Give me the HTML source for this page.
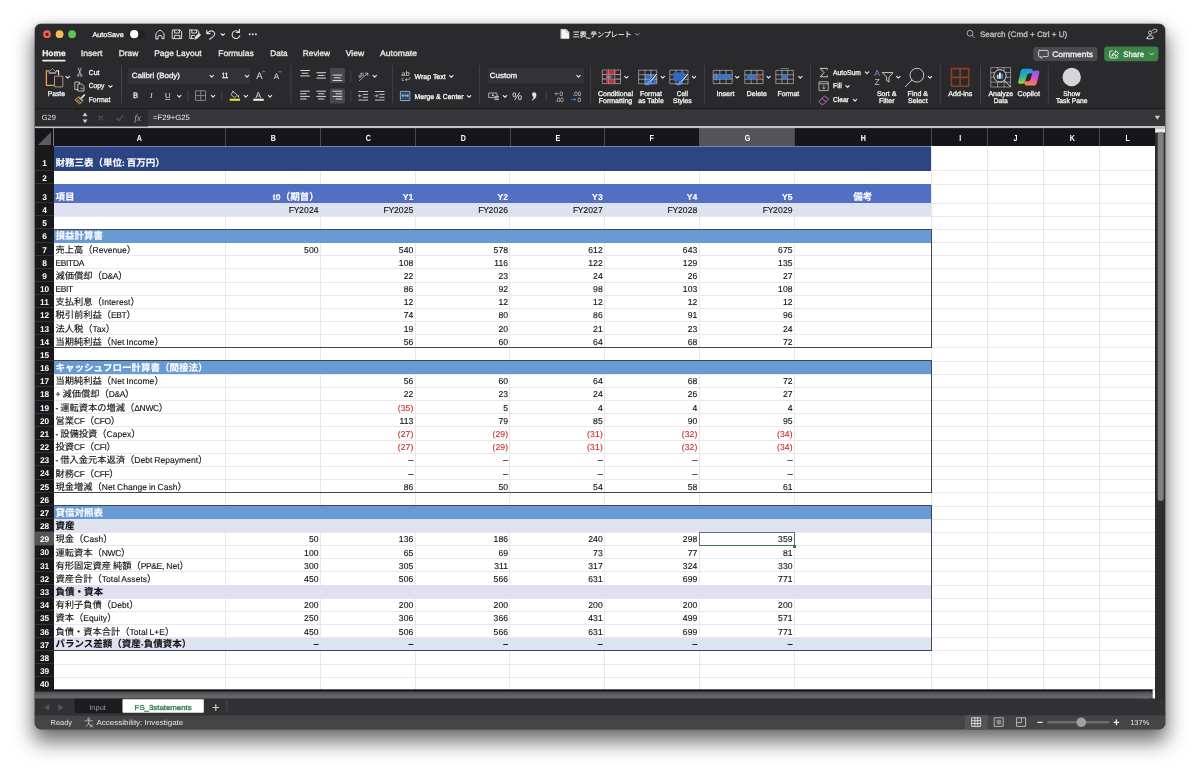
<!DOCTYPE html><html lang="ja"><head><meta charset="utf-8"><title>三表_テンプレート</title><style>html,body{margin:0;padding:0;background:#fff;}
body{text-rendering:geometricPrecision;width:1200px;height:776px;overflow:hidden;position:relative;font-family:"Liberation Sans","Noto Sans CJK JP",sans-serif;}
.win{will-change:transform;position:absolute;background:#2a292c;border-radius:6px;overflow:hidden;box-shadow:0 0 0 .5px rgba(0,0,0,.5),0 11px 20px 2px rgba(0,0,0,.56),0 0 7px rgba(0,0,0,.14);}
.win *{box-sizing:border-box;}
.win i{display:block;position:absolute;font-style:normal;}
.abs{position:absolute;}
/* grid */
.grid{position:absolute;background:#fff;overflow:hidden;}
.hl{left:0;width:100%;height:1px;background:#e7e7ec;}
.vl{top:0;height:100%;width:1px;background:#e7e7ec;}
.fill{left:0;}
.box{left:-2px;border:1px solid #3e4758;}
.c{position:absolute;font-size:9.25px;color:#111;-webkit-text-stroke:0.12px;white-space:nowrap;display:flex;align-items:flex-end;line-height:1;padding-bottom:0.8px;}
.c .l{font-size:8.5px;letter-spacing:0.04px;word-spacing:-0.5px;}
.c .l.u{letter-spacing:-0.36px;}
.c .t{position:relative;top:-0.1px;}
.c.b{font-weight:bold;}
.c.w{color:#fff;}
.c.r{justify-content:flex-end;}
.c.ctr{justify-content:center;}
.c.neg{color:#c9302c;}
.selbox{border:1px solid #4a7650;border-top-color:#6d7278;border-left-color:#6d7278;background:transparent;}
.selh{width:3px;height:3px;background:#3f6d45;}
/* headers */
.colhdr{position:absolute;background:#161518;}
.ch{position:absolute;top:0;height:100%;color:#fff;font-size:8.9px;font-weight:bold;text-align:center;line-height:20.3px;border-left:1px solid #4a494d;}
.ch span{display:inline-block;transform:scaleX(0.8);}
.ch.first{border-left:none;}
.ch.sel{background:#555457;border-left-color:#555457;}
.corner{left:0;top:0;width:19px;height:100%;border-right:1px solid #77767a;}
.corner:after{content:"";position:absolute;left:3px;bottom:1px;border-left:13px solid transparent;border-bottom:13px solid #5b5a5e;}
.rowhdr{position:absolute;background:#19181b;overflow:hidden;}
.rh{position:absolute;left:0;width:100%;color:#fff;font-size:8.3px;font-weight:bold;text-align:center;display:flex;align-items:flex-end;justify-content:center;line-height:1;padding-bottom:0.9px;border-bottom:1px solid #323135;}
.rh.sel{background:#555457;}
/* chrome */
.t7{position:absolute;color:#f2f2f2;font-size:7px;font-weight:bold;white-space:nowrap;line-height:1;}
.tab{position:absolute;color:#f2f2f2;font-size:8.2px;white-space:nowrap;line-height:1;top:25.4px;}
.lbl{position:absolute;color:#f2f2f2;font-size:6.6px;font-weight:bold;white-space:nowrap;line-height:7.6px;text-align:center;transform:translateX(-50%);}
.sep{position:absolute;width:1px;background:#403f43;top:44px;height:37px;}
.sep.s{height:12px;}
svg{position:absolute;overflow:visible;}

.c.r .l{font-size:8.6px;letter-spacing:0.12px;}
.c.r .l.u{letter-spacing:-0.3px;}
.c.b{font-size:9.5px;}
</style></head><body>
<div class="win" style="left:35px;top:24px;width:1130px;height:705px">
<div class="colhdr" style="left:0;top:104px;width:1120px;height:18.2px">
<i class="corner"></i>
<div class="ch first" style="left:19px;width:171.4px"><span>A</span></div>
<div class="ch" style="left:190.4px;width:94.8px"><span>B</span></div>
<div class="ch" style="left:285.2px;width:94.8px"><span>C</span></div>
<div class="ch" style="left:380px;width:94.7px"><span>D</span></div>
<div class="ch" style="left:474.7px;width:94.7px"><span>E</span></div>
<div class="ch" style="left:569.4px;width:94.6px"><span>F</span></div>
<div class="ch sel" style="left:664px;width:95.2px"><span>G</span></div>
<div class="ch" style="left:759.2px;width:137.2px"><span>H</span></div>
<div class="ch" style="left:896.4px;width:56.0px"><span>I</span></div>
<div class="ch" style="left:952.4px;width:56.0px"><span>J</span></div>
<div class="ch" style="left:1008.4px;width:56.0px"><span>K</span></div>
<div class="ch" style="left:1064.4px;width:55.6px"><span>L</span></div>
</div>
<div class="rowhdr" style="left:0;top:122.0px;width:19px;height:543.5px">
<div class="rh" style="top:0.0px;height:24.9px;padding-bottom:2.5px"><span>1</span></div>
<div class="rh" style="top:24.9px;height:13.1px"><span>2</span></div>
<div class="rh" style="top:38.0px;height:19.1px"><span>3</span></div>
<div class="rh" style="top:57.1px;height:13.17px"><span>4</span></div>
<div class="rh" style="top:70.27px;height:13.17px"><span>5</span></div>
<div class="rh" style="top:83.44px;height:13.17px"><span>6</span></div>
<div class="rh" style="top:96.61px;height:13.17px"><span>7</span></div>
<div class="rh" style="top:109.78px;height:13.17px"><span>8</span></div>
<div class="rh" style="top:122.95px;height:13.17px"><span>9</span></div>
<div class="rh" style="top:136.12px;height:13.17px"><span>10</span></div>
<div class="rh" style="top:149.29px;height:13.17px"><span>11</span></div>
<div class="rh" style="top:162.46px;height:13.17px"><span>12</span></div>
<div class="rh" style="top:175.63px;height:13.17px"><span>13</span></div>
<div class="rh" style="top:188.8px;height:13.17px"><span>14</span></div>
<div class="rh" style="top:201.97px;height:13.17px"><span>15</span></div>
<div class="rh" style="top:215.14px;height:13.17px"><span>16</span></div>
<div class="rh" style="top:228.31px;height:13.17px"><span>17</span></div>
<div class="rh" style="top:241.48px;height:13.17px"><span>18</span></div>
<div class="rh" style="top:254.65px;height:13.17px"><span>19</span></div>
<div class="rh" style="top:267.82px;height:13.17px"><span>20</span></div>
<div class="rh" style="top:280.99px;height:13.17px"><span>21</span></div>
<div class="rh" style="top:294.16px;height:13.17px"><span>22</span></div>
<div class="rh" style="top:307.33px;height:13.17px"><span>23</span></div>
<div class="rh" style="top:320.5px;height:13.17px"><span>24</span></div>
<div class="rh" style="top:333.67px;height:13.17px"><span>25</span></div>
<div class="rh" style="top:346.84px;height:13.17px"><span>26</span></div>
<div class="rh" style="top:360.01px;height:13.17px"><span>27</span></div>
<div class="rh" style="top:373.18px;height:13.17px"><span>28</span></div>
<div class="rh sel" style="top:386.35px;height:13.17px"><span>29</span></div>
<div class="rh" style="top:399.52px;height:13.17px"><span>30</span></div>
<div class="rh" style="top:412.69px;height:13.17px"><span>31</span></div>
<div class="rh" style="top:425.86px;height:13.17px"><span>32</span></div>
<div class="rh" style="top:439.03px;height:13.17px"><span>33</span></div>
<div class="rh" style="top:452.2px;height:13.17px"><span>34</span></div>
<div class="rh" style="top:465.37px;height:13.17px"><span>35</span></div>
<div class="rh" style="top:478.54px;height:13.17px"><span>36</span></div>
<div class="rh" style="top:491.71px;height:13.17px"><span>37</span></div>
<div class="rh" style="top:504.88px;height:13.17px"><span>38</span></div>
<div class="rh" style="top:518.05px;height:13.17px"><span>39</span></div>
<div class="rh" style="top:531.22px;height:13.17px"><span>40</span></div>
</div>
<div class="grid" style="left:19px;top:122.0px;width:1101px;height:543.5px">
<i class="hl" style="top:24.4px"></i>
<i class="hl" style="top:37.5px"></i>
<i class="hl" style="top:56.6px"></i>
<i class="hl" style="top:69.77px"></i>
<i class="hl" style="top:82.94px"></i>
<i class="hl" style="top:96.11px"></i>
<i class="hl" style="top:109.28px"></i>
<i class="hl" style="top:122.45px"></i>
<i class="hl" style="top:135.62px"></i>
<i class="hl" style="top:148.79px"></i>
<i class="hl" style="top:161.96px"></i>
<i class="hl" style="top:175.13px"></i>
<i class="hl" style="top:188.3px"></i>
<i class="hl" style="top:201.47px"></i>
<i class="hl" style="top:214.64px"></i>
<i class="hl" style="top:227.81px"></i>
<i class="hl" style="top:240.98px"></i>
<i class="hl" style="top:254.15px"></i>
<i class="hl" style="top:267.32px"></i>
<i class="hl" style="top:280.49px"></i>
<i class="hl" style="top:293.66px"></i>
<i class="hl" style="top:306.83px"></i>
<i class="hl" style="top:320.0px"></i>
<i class="hl" style="top:333.17px"></i>
<i class="hl" style="top:346.34px"></i>
<i class="hl" style="top:359.51px"></i>
<i class="hl" style="top:372.68px"></i>
<i class="hl" style="top:385.85px"></i>
<i class="hl" style="top:399.02px"></i>
<i class="hl" style="top:412.19px"></i>
<i class="hl" style="top:425.36px"></i>
<i class="hl" style="top:438.53px"></i>
<i class="hl" style="top:451.7px"></i>
<i class="hl" style="top:464.87px"></i>
<i class="hl" style="top:478.04px"></i>
<i class="hl" style="top:491.21px"></i>
<i class="hl" style="top:504.38px"></i>
<i class="hl" style="top:517.55px"></i>
<i class="hl" style="top:530.72px"></i>
<i class="hl" style="top:543.89px"></i>
<i class="vl" style="left:170.9px"></i>
<i class="vl" style="left:265.7px"></i>
<i class="vl" style="left:360.5px"></i>
<i class="vl" style="left:455.2px"></i>
<i class="vl" style="left:549.9px"></i>
<i class="vl" style="left:644.5px"></i>
<i class="vl" style="left:739.7px"></i>
<i class="vl" style="left:876.9px"></i>
<i class="vl" style="left:932.9px"></i>
<i class="vl" style="left:988.9px"></i>
<i class="vl" style="left:1044.9px"></i>
<i class="vl" style="left:1100.5px"></i>
<i class="fill" style="top:0.0px;height:24.9px;width:877px;background:#2c4482"></i>
<i class="fill" style="top:38.0px;height:19.1px;width:877px;background:#526fc3"></i>
<i class="fill" style="top:57.1px;height:13.17px;width:877px;background:#dde1f0"></i>
<i class="fill" style="top:83.44px;height:13.17px;width:877px;background:#689ad3"></i>
<i class="fill" style="top:215.14px;height:13.17px;width:877px;background:#689ad3"></i>
<i class="fill" style="top:360.01px;height:13.17px;width:877px;background:#689ad3"></i>
<i class="fill" style="top:373.18px;height:13.17px;width:877px;background:#dee3ef"></i>
<i class="fill" style="top:439.03px;height:13.17px;width:877px;background:#e1e0f2"></i>
<i class="fill" style="top:491.71px;height:13.17px;width:877px;background:#dde3f0"></i>
<i style="left:0;top:0;width:877.4px;height:0.9px;background:#7681b6"></i>
<i class="box" style="top:82.74px;height:119.53px;width:880px"></i>
<i class="box" style="top:214.44px;height:132.7px;width:880px"></i>
<i class="box" style="top:359.31px;height:145.87px;width:880px"></i>
<div class="c b w" style="top:0.0px;left:1.5px;width:600px;height:23.3px"><span class="t">財務三表（単位<span class="l">: </span>百万円）</span></div>
<div class="c b w" style="top:38.0px;left:1.5px;width:600px;height:19.1px"><span class="t">項目</span></div>
<div class="c b w r" style="top:38.0px;left:171.4px;width:93.3px;height:19.1px"><span class="t"><span class="l">t0</span>（期首）</span></div>
<div class="c b w r" style="top:38.0px;left:266.2px;width:93.3px;height:19.1px"><span class="t"><span class="l">Y1</span></span></div>
<div class="c b w r" style="top:38.0px;left:361px;width:93.2px;height:19.1px"><span class="t"><span class="l">Y2</span></span></div>
<div class="c b w r" style="top:38.0px;left:455.7px;width:93.2px;height:19.1px"><span class="t"><span class="l">Y3</span></span></div>
<div class="c b w r" style="top:38.0px;left:550.4px;width:93.1px;height:19.1px"><span class="t"><span class="l">Y4</span></span></div>
<div class="c b w r" style="top:38.0px;left:645px;width:93.7px;height:19.1px"><span class="t"><span class="l">Y5</span></span></div>
<div class="c r" style="top:57.1px;left:171.4px;width:93.3px;height:13.17px"><span class="t"><span class="l u">FY</span><span class="l">2024</span></span></div>
<div class="c r" style="top:57.1px;left:266.2px;width:93.3px;height:13.17px"><span class="t"><span class="l u">FY</span><span class="l">2025</span></span></div>
<div class="c r" style="top:57.1px;left:361px;width:93.2px;height:13.17px"><span class="t"><span class="l u">FY</span><span class="l">2026</span></span></div>
<div class="c r" style="top:57.1px;left:455.7px;width:93.2px;height:13.17px"><span class="t"><span class="l u">FY</span><span class="l">2027</span></span></div>
<div class="c r" style="top:57.1px;left:550.4px;width:93.1px;height:13.17px"><span class="t"><span class="l u">FY</span><span class="l">2028</span></span></div>
<div class="c r" style="top:57.1px;left:645px;width:93.7px;height:13.17px"><span class="t"><span class="l u">FY</span><span class="l">2029</span></span></div>
<div class="c b w" style="top:83.44px;left:1.5px;width:600px;height:13.17px"><span class="t">損益計算書</span></div>
<div class="c" style="top:96.61px;left:1.5px;width:600px;height:13.17px"><span class="t">売上高（<span class="l">Revenue</span>）</span></div>
<div class="c r" style="top:96.61px;left:171.4px;width:93.3px;height:13.17px"><span class="t"><span class="l">500</span></span></div>
<div class="c r" style="top:96.61px;left:266.2px;width:93.3px;height:13.17px"><span class="t"><span class="l">540</span></span></div>
<div class="c r" style="top:96.61px;left:361px;width:93.2px;height:13.17px"><span class="t"><span class="l">578</span></span></div>
<div class="c r" style="top:96.61px;left:455.7px;width:93.2px;height:13.17px"><span class="t"><span class="l">612</span></span></div>
<div class="c r" style="top:96.61px;left:550.4px;width:93.1px;height:13.17px"><span class="t"><span class="l">643</span></span></div>
<div class="c r" style="top:96.61px;left:645px;width:93.7px;height:13.17px"><span class="t"><span class="l">675</span></span></div>
<div class="c" style="top:109.78px;left:1.5px;width:600px;height:13.17px"><span class="t"><span class="l u">EBITDA</span></span></div>
<div class="c r" style="top:109.78px;left:266.2px;width:93.3px;height:13.17px"><span class="t"><span class="l">108</span></span></div>
<div class="c r" style="top:109.78px;left:361px;width:93.2px;height:13.17px"><span class="t"><span class="l">116</span></span></div>
<div class="c r" style="top:109.78px;left:455.7px;width:93.2px;height:13.17px"><span class="t"><span class="l">122</span></span></div>
<div class="c r" style="top:109.78px;left:550.4px;width:93.1px;height:13.17px"><span class="t"><span class="l">129</span></span></div>
<div class="c r" style="top:109.78px;left:645px;width:93.7px;height:13.17px"><span class="t"><span class="l">135</span></span></div>
<div class="c" style="top:122.95px;left:1.5px;width:600px;height:13.17px"><span class="t">減価償却（<span class="l u">D&amp;A</span>）</span></div>
<div class="c r" style="top:122.95px;left:266.2px;width:93.3px;height:13.17px"><span class="t"><span class="l">22</span></span></div>
<div class="c r" style="top:122.95px;left:361px;width:93.2px;height:13.17px"><span class="t"><span class="l">23</span></span></div>
<div class="c r" style="top:122.95px;left:455.7px;width:93.2px;height:13.17px"><span class="t"><span class="l">24</span></span></div>
<div class="c r" style="top:122.95px;left:550.4px;width:93.1px;height:13.17px"><span class="t"><span class="l">26</span></span></div>
<div class="c r" style="top:122.95px;left:645px;width:93.7px;height:13.17px"><span class="t"><span class="l">27</span></span></div>
<div class="c" style="top:136.12px;left:1.5px;width:600px;height:13.17px"><span class="t"><span class="l u">EBIT</span></span></div>
<div class="c r" style="top:136.12px;left:266.2px;width:93.3px;height:13.17px"><span class="t"><span class="l">86</span></span></div>
<div class="c r" style="top:136.12px;left:361px;width:93.2px;height:13.17px"><span class="t"><span class="l">92</span></span></div>
<div class="c r" style="top:136.12px;left:455.7px;width:93.2px;height:13.17px"><span class="t"><span class="l">98</span></span></div>
<div class="c r" style="top:136.12px;left:550.4px;width:93.1px;height:13.17px"><span class="t"><span class="l">103</span></span></div>
<div class="c r" style="top:136.12px;left:645px;width:93.7px;height:13.17px"><span class="t"><span class="l">108</span></span></div>
<div class="c" style="top:149.29px;left:1.5px;width:600px;height:13.17px"><span class="t">支払利息（<span class="l">Interest</span>）</span></div>
<div class="c r" style="top:149.29px;left:266.2px;width:93.3px;height:13.17px"><span class="t"><span class="l">12</span></span></div>
<div class="c r" style="top:149.29px;left:361px;width:93.2px;height:13.17px"><span class="t"><span class="l">12</span></span></div>
<div class="c r" style="top:149.29px;left:455.7px;width:93.2px;height:13.17px"><span class="t"><span class="l">12</span></span></div>
<div class="c r" style="top:149.29px;left:550.4px;width:93.1px;height:13.17px"><span class="t"><span class="l">12</span></span></div>
<div class="c r" style="top:149.29px;left:645px;width:93.7px;height:13.17px"><span class="t"><span class="l">12</span></span></div>
<div class="c" style="top:162.46px;left:1.5px;width:600px;height:13.17px"><span class="t">税引前利益（<span class="l u">EBT</span>）</span></div>
<div class="c r" style="top:162.46px;left:266.2px;width:93.3px;height:13.17px"><span class="t"><span class="l">74</span></span></div>
<div class="c r" style="top:162.46px;left:361px;width:93.2px;height:13.17px"><span class="t"><span class="l">80</span></span></div>
<div class="c r" style="top:162.46px;left:455.7px;width:93.2px;height:13.17px"><span class="t"><span class="l">86</span></span></div>
<div class="c r" style="top:162.46px;left:550.4px;width:93.1px;height:13.17px"><span class="t"><span class="l">91</span></span></div>
<div class="c r" style="top:162.46px;left:645px;width:93.7px;height:13.17px"><span class="t"><span class="l">96</span></span></div>
<div class="c" style="top:175.63px;left:1.5px;width:600px;height:13.17px"><span class="t">法人税（<span class="l">Tax</span>）</span></div>
<div class="c r" style="top:175.63px;left:266.2px;width:93.3px;height:13.17px"><span class="t"><span class="l">19</span></span></div>
<div class="c r" style="top:175.63px;left:361px;width:93.2px;height:13.17px"><span class="t"><span class="l">20</span></span></div>
<div class="c r" style="top:175.63px;left:455.7px;width:93.2px;height:13.17px"><span class="t"><span class="l">21</span></span></div>
<div class="c r" style="top:175.63px;left:550.4px;width:93.1px;height:13.17px"><span class="t"><span class="l">23</span></span></div>
<div class="c r" style="top:175.63px;left:645px;width:93.7px;height:13.17px"><span class="t"><span class="l">24</span></span></div>
<div class="c" style="top:188.8px;left:1.5px;width:600px;height:13.17px"><span class="t">当期純利益（<span class="l">Net Income</span>）</span></div>
<div class="c r" style="top:188.8px;left:266.2px;width:93.3px;height:13.17px"><span class="t"><span class="l">56</span></span></div>
<div class="c r" style="top:188.8px;left:361px;width:93.2px;height:13.17px"><span class="t"><span class="l">60</span></span></div>
<div class="c r" style="top:188.8px;left:455.7px;width:93.2px;height:13.17px"><span class="t"><span class="l">64</span></span></div>
<div class="c r" style="top:188.8px;left:550.4px;width:93.1px;height:13.17px"><span class="t"><span class="l">68</span></span></div>
<div class="c r" style="top:188.8px;left:645px;width:93.7px;height:13.17px"><span class="t"><span class="l">72</span></span></div>
<div class="c b w" style="top:215.14px;left:1.5px;width:600px;height:13.17px"><span class="t">キャッシュフロー計算書（間接法）</span></div>
<div class="c" style="top:228.31px;left:1.5px;width:600px;height:13.17px"><span class="t">当期純利益（<span class="l">Net Income</span>）</span></div>
<div class="c r" style="top:228.31px;left:266.2px;width:93.3px;height:13.17px"><span class="t"><span class="l">56</span></span></div>
<div class="c r" style="top:228.31px;left:361px;width:93.2px;height:13.17px"><span class="t"><span class="l">60</span></span></div>
<div class="c r" style="top:228.31px;left:455.7px;width:93.2px;height:13.17px"><span class="t"><span class="l">64</span></span></div>
<div class="c r" style="top:228.31px;left:550.4px;width:93.1px;height:13.17px"><span class="t"><span class="l">68</span></span></div>
<div class="c r" style="top:228.31px;left:645px;width:93.7px;height:13.17px"><span class="t"><span class="l">72</span></span></div>
<div class="c" style="top:241.48px;left:1.5px;width:600px;height:13.17px"><span class="t"><span class="l">+ </span>減価償却（<span class="l u">D&amp;A</span>）</span></div>
<div class="c r" style="top:241.48px;left:266.2px;width:93.3px;height:13.17px"><span class="t"><span class="l">22</span></span></div>
<div class="c r" style="top:241.48px;left:361px;width:93.2px;height:13.17px"><span class="t"><span class="l">23</span></span></div>
<div class="c r" style="top:241.48px;left:455.7px;width:93.2px;height:13.17px"><span class="t"><span class="l">24</span></span></div>
<div class="c r" style="top:241.48px;left:550.4px;width:93.1px;height:13.17px"><span class="t"><span class="l">26</span></span></div>
<div class="c r" style="top:241.48px;left:645px;width:93.7px;height:13.17px"><span class="t"><span class="l">27</span></span></div>
<div class="c" style="top:254.65px;left:1.5px;width:600px;height:13.17px"><span class="t"><span class="l">- </span>運転資本の増減（<span class="l u">ΔNWC</span>）</span></div>
<div class="c r neg" style="top:254.65px;left:266.2px;width:93.3px;height:13.17px"><span class="t"><span class="l">(35)</span></span></div>
<div class="c r" style="top:254.65px;left:361px;width:93.2px;height:13.17px"><span class="t"><span class="l">5</span></span></div>
<div class="c r" style="top:254.65px;left:455.7px;width:93.2px;height:13.17px"><span class="t"><span class="l">4</span></span></div>
<div class="c r" style="top:254.65px;left:550.4px;width:93.1px;height:13.17px"><span class="t"><span class="l">4</span></span></div>
<div class="c r" style="top:254.65px;left:645px;width:93.7px;height:13.17px"><span class="t"><span class="l">4</span></span></div>
<div class="c" style="top:267.82px;left:1.5px;width:600px;height:13.17px"><span class="t">営業<span class="l u">CF</span>（<span class="l u">CFO</span>）</span></div>
<div class="c r" style="top:267.82px;left:266.2px;width:93.3px;height:13.17px"><span class="t"><span class="l">113</span></span></div>
<div class="c r" style="top:267.82px;left:361px;width:93.2px;height:13.17px"><span class="t"><span class="l">79</span></span></div>
<div class="c r" style="top:267.82px;left:455.7px;width:93.2px;height:13.17px"><span class="t"><span class="l">85</span></span></div>
<div class="c r" style="top:267.82px;left:550.4px;width:93.1px;height:13.17px"><span class="t"><span class="l">90</span></span></div>
<div class="c r" style="top:267.82px;left:645px;width:93.7px;height:13.17px"><span class="t"><span class="l">95</span></span></div>
<div class="c" style="top:280.99px;left:1.5px;width:600px;height:13.17px"><span class="t"><span class="l">- </span>設備投資（<span class="l">Capex</span>）</span></div>
<div class="c r neg" style="top:280.99px;left:266.2px;width:93.3px;height:13.17px"><span class="t"><span class="l">(27)</span></span></div>
<div class="c r neg" style="top:280.99px;left:361px;width:93.2px;height:13.17px"><span class="t"><span class="l">(29)</span></span></div>
<div class="c r neg" style="top:280.99px;left:455.7px;width:93.2px;height:13.17px"><span class="t"><span class="l">(31)</span></span></div>
<div class="c r neg" style="top:280.99px;left:550.4px;width:93.1px;height:13.17px"><span class="t"><span class="l">(32)</span></span></div>
<div class="c r neg" style="top:280.99px;left:645px;width:93.7px;height:13.17px"><span class="t"><span class="l">(34)</span></span></div>
<div class="c" style="top:294.16px;left:1.5px;width:600px;height:13.17px"><span class="t">投資<span class="l u">CF</span>（<span class="l u">CFI</span>）</span></div>
<div class="c r neg" style="top:294.16px;left:266.2px;width:93.3px;height:13.17px"><span class="t"><span class="l">(27)</span></span></div>
<div class="c r neg" style="top:294.16px;left:361px;width:93.2px;height:13.17px"><span class="t"><span class="l">(29)</span></span></div>
<div class="c r neg" style="top:294.16px;left:455.7px;width:93.2px;height:13.17px"><span class="t"><span class="l">(31)</span></span></div>
<div class="c r neg" style="top:294.16px;left:550.4px;width:93.1px;height:13.17px"><span class="t"><span class="l">(32)</span></span></div>
<div class="c r neg" style="top:294.16px;left:645px;width:93.7px;height:13.17px"><span class="t"><span class="l">(34)</span></span></div>
<div class="c" style="top:307.33px;left:1.5px;width:600px;height:13.17px"><span class="t"><span class="l">- </span>借入金元本返済（<span class="l">Debt Repayment</span>）</span></div>
<div class="c r" style="top:307.33px;left:266.2px;width:93.3px;height:13.17px"><span class="t">–</span></div>
<div class="c r" style="top:307.33px;left:361px;width:93.2px;height:13.17px"><span class="t">–</span></div>
<div class="c r" style="top:307.33px;left:455.7px;width:93.2px;height:13.17px"><span class="t">–</span></div>
<div class="c r" style="top:307.33px;left:550.4px;width:93.1px;height:13.17px"><span class="t">–</span></div>
<div class="c r" style="top:307.33px;left:645px;width:93.7px;height:13.17px"><span class="t">–</span></div>
<div class="c" style="top:320.5px;left:1.5px;width:600px;height:13.17px"><span class="t">財務<span class="l u">CF</span>（<span class="l u">CFF</span>）</span></div>
<div class="c r" style="top:320.5px;left:266.2px;width:93.3px;height:13.17px"><span class="t">–</span></div>
<div class="c r" style="top:320.5px;left:361px;width:93.2px;height:13.17px"><span class="t">–</span></div>
<div class="c r" style="top:320.5px;left:455.7px;width:93.2px;height:13.17px"><span class="t">–</span></div>
<div class="c r" style="top:320.5px;left:550.4px;width:93.1px;height:13.17px"><span class="t">–</span></div>
<div class="c r" style="top:320.5px;left:645px;width:93.7px;height:13.17px"><span class="t">–</span></div>
<div class="c" style="top:333.67px;left:1.5px;width:600px;height:13.17px"><span class="t">現金増減（<span class="l">Net Change in Cash</span>）</span></div>
<div class="c r" style="top:333.67px;left:266.2px;width:93.3px;height:13.17px"><span class="t"><span class="l">86</span></span></div>
<div class="c r" style="top:333.67px;left:361px;width:93.2px;height:13.17px"><span class="t"><span class="l">50</span></span></div>
<div class="c r" style="top:333.67px;left:455.7px;width:93.2px;height:13.17px"><span class="t"><span class="l">54</span></span></div>
<div class="c r" style="top:333.67px;left:550.4px;width:93.1px;height:13.17px"><span class="t"><span class="l">58</span></span></div>
<div class="c r" style="top:333.67px;left:645px;width:93.7px;height:13.17px"><span class="t"><span class="l">61</span></span></div>
<div class="c b w" style="top:360.01px;left:1.5px;width:600px;height:13.17px"><span class="t">貸借対照表</span></div>
<div class="c b" style="top:373.18px;left:1.5px;width:600px;height:13.17px"><span class="t">資産</span></div>
<div class="c" style="top:386.35px;left:1.5px;width:600px;height:13.17px"><span class="t">現金（<span class="l">Cash</span>）</span></div>
<div class="c r" style="top:386.35px;left:171.4px;width:93.3px;height:13.17px"><span class="t"><span class="l">50</span></span></div>
<div class="c r" style="top:386.35px;left:266.2px;width:93.3px;height:13.17px"><span class="t"><span class="l">136</span></span></div>
<div class="c r" style="top:386.35px;left:361px;width:93.2px;height:13.17px"><span class="t"><span class="l">186</span></span></div>
<div class="c r" style="top:386.35px;left:455.7px;width:93.2px;height:13.17px"><span class="t"><span class="l">240</span></span></div>
<div class="c r" style="top:386.35px;left:550.4px;width:93.1px;height:13.17px"><span class="t"><span class="l">298</span></span></div>
<div class="c r" style="top:386.35px;left:645px;width:93.7px;height:13.17px"><span class="t"><span class="l">359</span></span></div>
<div class="c" style="top:399.52px;left:1.5px;width:600px;height:13.17px"><span class="t">運転資本（<span class="l u">NWC</span>）</span></div>
<div class="c r" style="top:399.52px;left:171.4px;width:93.3px;height:13.17px"><span class="t"><span class="l">100</span></span></div>
<div class="c r" style="top:399.52px;left:266.2px;width:93.3px;height:13.17px"><span class="t"><span class="l">65</span></span></div>
<div class="c r" style="top:399.52px;left:361px;width:93.2px;height:13.17px"><span class="t"><span class="l">69</span></span></div>
<div class="c r" style="top:399.52px;left:455.7px;width:93.2px;height:13.17px"><span class="t"><span class="l">73</span></span></div>
<div class="c r" style="top:399.52px;left:550.4px;width:93.1px;height:13.17px"><span class="t"><span class="l">77</span></span></div>
<div class="c r" style="top:399.52px;left:645px;width:93.7px;height:13.17px"><span class="t"><span class="l">81</span></span></div>
<div class="c" style="top:412.69px;left:1.5px;width:600px;height:13.17px"><span class="t">有形固定資産<span class="l"> </span>純額（<span class="l u">PP&amp;E</span><span class="l">, Net</span>）</span></div>
<div class="c r" style="top:412.69px;left:171.4px;width:93.3px;height:13.17px"><span class="t"><span class="l">300</span></span></div>
<div class="c r" style="top:412.69px;left:266.2px;width:93.3px;height:13.17px"><span class="t"><span class="l">305</span></span></div>
<div class="c r" style="top:412.69px;left:361px;width:93.2px;height:13.17px"><span class="t"><span class="l">311</span></span></div>
<div class="c r" style="top:412.69px;left:455.7px;width:93.2px;height:13.17px"><span class="t"><span class="l">317</span></span></div>
<div class="c r" style="top:412.69px;left:550.4px;width:93.1px;height:13.17px"><span class="t"><span class="l">324</span></span></div>
<div class="c r" style="top:412.69px;left:645px;width:93.7px;height:13.17px"><span class="t"><span class="l">330</span></span></div>
<div class="c" style="top:425.86px;left:1.5px;width:600px;height:13.17px"><span class="t">資産合計（<span class="l">Total Assets</span>）</span></div>
<div class="c r" style="top:425.86px;left:171.4px;width:93.3px;height:13.17px"><span class="t"><span class="l">450</span></span></div>
<div class="c r" style="top:425.86px;left:266.2px;width:93.3px;height:13.17px"><span class="t"><span class="l">506</span></span></div>
<div class="c r" style="top:425.86px;left:361px;width:93.2px;height:13.17px"><span class="t"><span class="l">566</span></span></div>
<div class="c r" style="top:425.86px;left:455.7px;width:93.2px;height:13.17px"><span class="t"><span class="l">631</span></span></div>
<div class="c r" style="top:425.86px;left:550.4px;width:93.1px;height:13.17px"><span class="t"><span class="l">699</span></span></div>
<div class="c r" style="top:425.86px;left:645px;width:93.7px;height:13.17px"><span class="t"><span class="l">771</span></span></div>
<div class="c b" style="top:439.03px;left:1.5px;width:600px;height:13.17px"><span class="t">負債・資本</span></div>
<div class="c" style="top:452.2px;left:1.5px;width:600px;height:13.17px"><span class="t">有利子負債（<span class="l">Debt</span>）</span></div>
<div class="c r" style="top:452.2px;left:171.4px;width:93.3px;height:13.17px"><span class="t"><span class="l">200</span></span></div>
<div class="c r" style="top:452.2px;left:266.2px;width:93.3px;height:13.17px"><span class="t"><span class="l">200</span></span></div>
<div class="c r" style="top:452.2px;left:361px;width:93.2px;height:13.17px"><span class="t"><span class="l">200</span></span></div>
<div class="c r" style="top:452.2px;left:455.7px;width:93.2px;height:13.17px"><span class="t"><span class="l">200</span></span></div>
<div class="c r" style="top:452.2px;left:550.4px;width:93.1px;height:13.17px"><span class="t"><span class="l">200</span></span></div>
<div class="c r" style="top:452.2px;left:645px;width:93.7px;height:13.17px"><span class="t"><span class="l">200</span></span></div>
<div class="c" style="top:465.37px;left:1.5px;width:600px;height:13.17px"><span class="t">資本（<span class="l">Equity</span>）</span></div>
<div class="c r" style="top:465.37px;left:171.4px;width:93.3px;height:13.17px"><span class="t"><span class="l">250</span></span></div>
<div class="c r" style="top:465.37px;left:266.2px;width:93.3px;height:13.17px"><span class="t"><span class="l">306</span></span></div>
<div class="c r" style="top:465.37px;left:361px;width:93.2px;height:13.17px"><span class="t"><span class="l">366</span></span></div>
<div class="c r" style="top:465.37px;left:455.7px;width:93.2px;height:13.17px"><span class="t"><span class="l">431</span></span></div>
<div class="c r" style="top:465.37px;left:550.4px;width:93.1px;height:13.17px"><span class="t"><span class="l">499</span></span></div>
<div class="c r" style="top:465.37px;left:645px;width:93.7px;height:13.17px"><span class="t"><span class="l">571</span></span></div>
<div class="c" style="top:478.54px;left:1.5px;width:600px;height:13.17px"><span class="t">負債・資本合計（<span class="l">Total L+E</span>）</span></div>
<div class="c r" style="top:478.54px;left:171.4px;width:93.3px;height:13.17px"><span class="t"><span class="l">450</span></span></div>
<div class="c r" style="top:478.54px;left:266.2px;width:93.3px;height:13.17px"><span class="t"><span class="l">506</span></span></div>
<div class="c r" style="top:478.54px;left:361px;width:93.2px;height:13.17px"><span class="t"><span class="l">566</span></span></div>
<div class="c r" style="top:478.54px;left:455.7px;width:93.2px;height:13.17px"><span class="t"><span class="l">631</span></span></div>
<div class="c r" style="top:478.54px;left:550.4px;width:93.1px;height:13.17px"><span class="t"><span class="l">699</span></span></div>
<div class="c r" style="top:478.54px;left:645px;width:93.7px;height:13.17px"><span class="t"><span class="l">771</span></span></div>
<div class="c b" style="top:491.71px;left:1.5px;width:600px;height:13.17px"><span class="t">バランス差額（資産<span class="l">-</span>負債資本）</span></div>
<div class="c b r" style="top:491.71px;left:171.4px;width:93.3px;height:13.17px"><span class="t">–</span></div>
<div class="c b r" style="top:491.71px;left:266.2px;width:93.3px;height:13.17px"><span class="t">–</span></div>
<div class="c b r" style="top:491.71px;left:361px;width:93.2px;height:13.17px"><span class="t">–</span></div>
<div class="c b r" style="top:491.71px;left:455.7px;width:93.2px;height:13.17px"><span class="t">–</span></div>
<div class="c b r" style="top:491.71px;left:550.4px;width:93.1px;height:13.17px"><span class="t">–</span></div>
<div class="c b r" style="top:491.71px;left:645px;width:93.7px;height:13.17px"><span class="t">–</span></div>
<div class="c b w ctr" style="top:38.0px;left:740.2px;width:137.2px;height:19.1px"><span class="t">備考</span></div>
<i class="selbox" style="top:385.95px;left:644.8px;width:96.2px;height:14.17px"></i>
<i class="selh" style="top:398.62px;left:739.3px"></i>
</div>
<svg class="chrome" width="1130" height="705" viewBox="35 24 1130 705" style="left:0;top:0;pointer-events:none" font-family="Liberation Sans, Noto Sans CJK JP, sans-serif">
<circle cx="47" cy="34.2" r="3.9" fill="#ee5f57"/>
<circle cx="59.6" cy="34.2" r="3.9" fill="#f5bd4f"/>
<circle cx="72.1" cy="34.2" r="3.9" fill="#5fc454"/>
<circle cx="47" cy="34.2" r="1.5" fill="#5a1210"/>
<text x="92.5" y="36.7" font-size="7" font-weight="normal" text-anchor="start" fill="#f1f1f1" textLength="31.2" lengthAdjust="spacingAndGlyphs" stroke="#f1f1f1" stroke-width="0.32">AutoSave</text>
<rect x="128.5" y="29.7" width="16.4" height="9" rx="4.5" fill="#222124"/>
<circle cx="134.2" cy="34.2" r="4.1" fill="#fdfdfd"/>
<path d="M155.9 38.7 V33.9 Q156 33.2 158.6 30.8 Q160 29.6 161.4 30.8 Q164 33.2 164.1 33.9 V38.7 H162 V36.3 Q160 34.1 158 36.3 V38.7 Z" fill="none" stroke="#dcdcdc" stroke-width="1" stroke-linecap="round" stroke-linejoin="round"/>
<path d="M172.6 30 H180 L181.6 31.6 V38.6 H172.6 Z M174.6 30.2 V33 H179.4 V30.2 M174.4 38.4 V35.4 H179.8 V38.4" fill="none" stroke="#dcdcdc" stroke-width="1" stroke-linecap="round" stroke-linejoin="round"/>
<path d="M189.8 30 H197.2 L198.8 31.6 V34.5 M194 38.6 H189.8 V30 M191.8 30.2 V33 H196.6 V30.2 M191.6 38.4 V35.4 H194.5" fill="none" stroke="#dcdcdc" stroke-width="1" stroke-linecap="round" stroke-linejoin="round"/>
<path d="M195 38.8 L195.6 36.6 L199 33.4 L200.6 35 L197.2 38.2 Z" fill="#e6e6e6" stroke="#dcdcdc" stroke-width="0.9" stroke-linecap="round" stroke-linejoin="round"/>
<path d="M206.8 30.2 V33.6 H210.2 M207 33.4 Q210.5 29.5 213.6 31.6 Q216.2 34 213 36.6 L209.6 39.2" fill="none" stroke="#dcdcdc" stroke-width="1.1" stroke-linecap="round" stroke-linejoin="round"/>
<path d="M221.1 33.75 l1.7 1.7 l1.7 -1.7" fill="none" stroke="#e8e8e8" stroke-width="1.1" stroke-linecap="round" stroke-linejoin="round"/>
<path d="M239.5 29.3 V32.5 H236.3 M239.2 32.3 A3.9 3.9 0 1 0 239.8 35.6" fill="none" stroke="#dcdcdc" stroke-width="1.1" stroke-linecap="round" stroke-linejoin="round"/>
<circle cx="249.69500000000002" cy="34.3" r="0.95" fill="#e4e4e4"/>
<circle cx="252.8" cy="34.3" r="0.95" fill="#e4e4e4"/>
<circle cx="255.905" cy="34.3" r="0.95" fill="#e4e4e4"/>
<path d="M561.2 29.4 H566.2 L569 32.2 V38.4 H561.2 Z" fill="#f4f4f4" stroke="#f4f4f4" stroke-width="0.6" stroke-linecap="round" stroke-linejoin="round"/>
<path d="M566.2 29.4 V32.2 H569" fill="none" stroke="#9a9a9a" stroke-width="0.6" stroke-linecap="round" stroke-linejoin="round"/>
<text x="572.8" y="36.9" font-size="7" font-weight="normal" text-anchor="start" fill="#efefef" textLength="58.6" lengthAdjust="spacingAndGlyphs" stroke="#efefef" stroke-width="0.18">三表_テンプレート</text>
<path d="M635.3 33.35 l1.9 1.9 l1.9 -1.9" fill="none" stroke="#bdbdbd" stroke-width="0.8" stroke-linecap="round" stroke-linejoin="round"/>
<circle cx="970" cy="33.2" r="2.9" fill="none" stroke="#b8b8b8" stroke-width="0.9"/>
<path d="M972.2 35.4 L974.4 37.6" fill="none" stroke="#b8b8b8" stroke-width="0.9" stroke-linecap="round" stroke-linejoin="round"/>
<text x="979.9" y="37.1" font-size="7.9" font-weight="normal" text-anchor="start" fill="#bebebe" textLength="87.4" lengthAdjust="spacingAndGlyphs" stroke="#bebebe" stroke-width="0.32">Search (Cmd + Ctrl + U)</text>
<circle cx="1150.2" cy="32.6" r="1.7" fill="none" stroke="#dcdcdc" stroke-width="0.9"/>
<path d="M1147 38.6 Q1147 35.6 1150.2 35.6 Q1153.4 35.6 1153.4 38.2 Q1150 39.6 1147 38.6 Z" fill="none" stroke="#dcdcdc" stroke-width="0.9" stroke-linecap="round" stroke-linejoin="round"/>
<path d="M1152.6 30.4 Q1153 29.2 1154.4 29.2 H1155.6 Q1157 29.2 1157 30.6 Q1157 32 1155.6 32 H1154.8 L1153.8 33" fill="none" stroke="#dcdcdc" stroke-width="0.9" stroke-linecap="round" stroke-linejoin="round"/>
<text x="42.2" y="55.9" font-size="8.2" font-weight="bold" text-anchor="start" fill="#f1f1f1" textLength="23.4" lengthAdjust="spacingAndGlyphs" stroke="#f1f1f1" stroke-width="0.25">Home</text>
<text x="80.8" y="55.9" font-size="8.2" font-weight="normal" text-anchor="start" fill="#f1f1f1" textLength="21.7" lengthAdjust="spacingAndGlyphs" opacity="0.96" stroke="#f1f1f1" stroke-width="0.32">Insert</text>
<text x="118.7" y="55.9" font-size="8.2" font-weight="normal" text-anchor="start" fill="#f1f1f1" textLength="19.6" lengthAdjust="spacingAndGlyphs" opacity="0.96" stroke="#f1f1f1" stroke-width="0.32">Draw</text>
<text x="154.2" y="55.9" font-size="8.2" font-weight="normal" text-anchor="start" fill="#f1f1f1" textLength="47.5" lengthAdjust="spacingAndGlyphs" opacity="0.96" stroke="#f1f1f1" stroke-width="0.32">Page Layout</text>
<text x="218.3" y="55.9" font-size="8.2" font-weight="normal" text-anchor="start" fill="#f1f1f1" textLength="35.4" lengthAdjust="spacingAndGlyphs" opacity="0.96" stroke="#f1f1f1" stroke-width="0.32">Formulas</text>
<text x="270.3" y="55.9" font-size="8.2" font-weight="normal" text-anchor="start" fill="#f1f1f1" textLength="17.2" lengthAdjust="spacingAndGlyphs" opacity="0.96" stroke="#f1f1f1" stroke-width="0.32">Data</text>
<text x="302.8" y="55.9" font-size="8.2" font-weight="normal" text-anchor="start" fill="#f1f1f1" textLength="27.2" lengthAdjust="spacingAndGlyphs" opacity="0.96" stroke="#f1f1f1" stroke-width="0.32">Review</text>
<text x="345.8" y="55.9" font-size="8.2" font-weight="normal" text-anchor="start" fill="#f1f1f1" textLength="18.4" lengthAdjust="spacingAndGlyphs" opacity="0.96" stroke="#f1f1f1" stroke-width="0.32">View</text>
<text x="380" y="55.9" font-size="8.2" font-weight="normal" text-anchor="start" fill="#f1f1f1" textLength="37" lengthAdjust="spacingAndGlyphs" opacity="0.96" stroke="#f1f1f1" stroke-width="0.32">Automate</text>
<rect x="42.2" y="59.8" width="23.4" height="1.7" rx="0.8" fill="#ececec"/>
<rect x="1033.3" y="47" width="64.2" height="13.9" rx="3" fill="#4b4a4e"/>
<path d="M1039.4 50.4 H1047.4 Q1048.2 50.4 1048.2 51.2 V55.8 Q1048.2 56.6 1047.4 56.6 H1043 L1041 58.4 V56.6 H1039.4 Q1038.6 56.6 1038.6 55.8 V51.2 Q1038.6 50.4 1039.4 50.4 Z" fill="none" stroke="#dcdcdc" stroke-width="0.9" stroke-linecap="round" stroke-linejoin="round"/>
<text x="1052.2" y="56.6" font-size="8" font-weight="normal" text-anchor="start" fill="#f1f1f1" textLength="40.8" lengthAdjust="spacingAndGlyphs" stroke="#f1f1f1" stroke-width="0.32">Comments</text>
<rect x="1104.2" y="46.6" width="54.2" height="14.6" rx="3.2" fill="#3a8448"/>
<path d="M1112.4 51 H1110.6 Q1109.8 51 1109.8 51.8 V57.2 Q1109.8 58 1110.6 58 H1116.6 Q1117.4 58 1117.4 57.2 V56.4" fill="none" stroke="#f4f4f4" stroke-width="0.9" stroke-linecap="round" stroke-linejoin="round"/>
<path d="M1111.8 56 Q1112.2 52.6 1115.4 52.6 V50.6 L1118.8 53.6 L1115.4 56.4 V54.6 Q1113.2 54.4 1111.8 56 Z" fill="none" stroke="#f4f4f4" stroke-width="0.9" stroke-linecap="round" stroke-linejoin="round"/>
<text x="1123.3" y="56.6" font-size="8" font-weight="normal" text-anchor="start" fill="#f1f1f1" textLength="20.9" lengthAdjust="spacingAndGlyphs" stroke="#f1f1f1" stroke-width="0.32">Share</text>
<path d="M1149.7 53.0 l2 2 l2 -2" fill="none" stroke="#e8e8e8" stroke-width="0.9" stroke-linecap="round" stroke-linejoin="round"/>
<rect x="46.4" y="70.8" width="12" height="14.6" rx="0" fill="#24232b"/>
<path d="M49 70.9 H46.4 V85.3 H53.6" fill="none" stroke="#eaa640" stroke-width="1.3" stroke-linecap="round" stroke-linejoin="round"/>
<path d="M56.4 70.9 H58.6 V74.8" fill="none" stroke="#ececec" stroke-width="1.1" stroke-linecap="round" stroke-linejoin="round"/>
<path d="M48.9 72 L52.4 68.5 L55.9 72" fill="none" stroke="#bdbdbd" stroke-width="0.7" stroke-linecap="round" stroke-linejoin="round"/>
<rect x="48.7" y="71.9" width="7.6" height="2.1" rx="0" fill="#8a8a8c"/>
<rect x="54.5" y="76.2" width="8.3" height="10.7" rx="0.4" fill="#27262c" stroke="#cdab90" stroke-width="0.85"/>
<path d="M65.9 76.4 l1.8 1.8 l1.8 -1.8" fill="none" stroke="#e8e8e8" stroke-width="1.1" stroke-linecap="round" stroke-linejoin="round"/>
<text x="47.65" y="95.9" font-size="7.2" font-weight="normal" text-anchor="start" fill="#f1f1f1" textLength="17.3" lengthAdjust="spacingAndGlyphs" stroke="#f1f1f1" stroke-width="0.32">Paste</text>
<path d="M78.2 68 L80.8 74.6 M81.2 68 L78.6 74.6" fill="none" stroke="#dcdcdc" stroke-width="0.75" stroke-linecap="round" stroke-linejoin="round"/>
<circle cx="78.2" cy="75.5" r="0.95" fill="none" stroke="#cfcfcf" stroke-width="0.65"/><circle cx="81.3" cy="75.5" r="0.95" fill="none" stroke="#cfcfcf" stroke-width="0.65"/>
<text x="88.7" y="74.9" font-size="7.2" font-weight="normal" text-anchor="start" fill="#f1f1f1" textLength="10.8" lengthAdjust="spacingAndGlyphs" stroke="#f1f1f1" stroke-width="0.32">Cut</text>
<path d="M75.2 82 H79.4 V89.4 H75.2 Z" fill="none" stroke="#dcdcdc" stroke-width="0.8" stroke-linecap="round" stroke-linejoin="round"/>
<path d="M78.2 84 H81.8 L84 86.2 V91 H78.2 Z" fill="#2a292c" stroke="#dcdcdc" stroke-width="0.8" stroke-linecap="round" stroke-linejoin="round"/>
<path d="M81 88.6 H82.8 M81 87.2 h0.1" fill="none" stroke="#dcdcdc" stroke-width="0.6" stroke-linecap="round" stroke-linejoin="round"/>
<text x="88.7" y="88.4" font-size="7.2" font-weight="normal" text-anchor="start" fill="#f1f1f1" textLength="15.6" lengthAdjust="spacingAndGlyphs" stroke="#f1f1f1" stroke-width="0.32">Copy</text>
<path d="M108.7 85.55 l1.7 1.7 l1.7 -1.7" fill="none" stroke="#e8e8e8" stroke-width="1.1" stroke-linecap="round" stroke-linejoin="round"/>
<path d="M84.3 95.2 L81.6 98" fill="none" stroke="#e4e4e4" stroke-width="1.7" stroke-linecap="round" stroke-linejoin="round"/>
<path d="M79.2 96.8 L83 100.6" fill="none" stroke="#e4e4e4" stroke-width="1" stroke-linecap="round" stroke-linejoin="round"/>
<path d="M78.6 97.6 L82.4 101.4 L79.6 103.8 L75.2 100.2 Z M77.4 99 L80.8 102.6 M76.4 100 L79.8 103.4" fill="none" stroke="#e2b64c" stroke-width="0.75" stroke-linecap="round" stroke-linejoin="round"/>
<text x="88.7" y="101.9" font-size="7.2" font-weight="normal" text-anchor="start" fill="#f1f1f1" textLength="21.6" lengthAdjust="spacingAndGlyphs" stroke="#f1f1f1" stroke-width="0.32">Format</text>
<rect x="121.0" y="65.2" width="1" height="38.3" fill="#434246"/>
<rect x="128" y="68.2" width="122" height="15.8" rx="1.5" fill="#333236"/>
<text x="131.7" y="78.3" font-size="7.5" font-weight="normal" text-anchor="start" fill="#f1f1f1" textLength="48.3" lengthAdjust="spacingAndGlyphs" stroke="#f1f1f1" stroke-width="0.32">Calibri (Body)</text>
<path d="M210.0 75.35 l1.7 1.7 l1.7 -1.7" fill="none" stroke="#e8e8e8" stroke-width="1.1" stroke-linecap="round" stroke-linejoin="round"/>
<text x="221.7" y="78.3" font-size="7.5" font-weight="normal" text-anchor="start" fill="#f1f1f1" textLength="6.6" lengthAdjust="spacingAndGlyphs" stroke="#f1f1f1" stroke-width="0.32">11</text>
<path d="M245.3 75.35 l1.7 1.7 l1.7 -1.7" fill="none" stroke="#e8e8e8" stroke-width="1.1" stroke-linecap="round" stroke-linejoin="round"/>
<text x="256.2" y="78.9" font-size="9.6" font-weight="normal" text-anchor="start" fill="#e0e0e0">A</text>
<path d="M262.4 72 l1.1 -1.1 l1.1 1.1" fill="none" stroke="#dcdcdc" stroke-width="0.6" stroke-linecap="round" stroke-linejoin="round"/>
<text x="273.8" y="78.9" font-size="8" font-weight="normal" text-anchor="start" fill="#e0e0e0">A</text>
<path d="M279 71.4 l1 1 l1 -1" fill="none" stroke="#dcdcdc" stroke-width="0.6" stroke-linecap="round" stroke-linejoin="round"/>
<text x="135.5" y="98.3" font-size="7.6" font-weight="normal" text-anchor="middle" fill="#e4e4e4" stroke="#e4e4e4" stroke-width="0.32">B</text>
<text x="151.4" y="98.3" font-size="7.8" font-weight="normal" text-anchor="middle" fill="#e0e0e0" font-style="italic" font-family="Liberation Serif, serif">I</text>
<text x="167.7" y="97.8" font-size="7.4" font-weight="normal" text-anchor="middle" fill="#e0e0e0">U</text>
<rect x="165" y="99.3" width="5.4" height="0.7" rx="0" fill="#d8d8d8"/>
<path d="M177.5 95.35 l1.7 1.7 l1.7 -1.7" fill="none" stroke="#e8e8e8" stroke-width="1.1" stroke-linecap="round" stroke-linejoin="round"/>
<rect x="187.7" y="90" width="1" height="12" fill="#434246"/>
<path d="M196 90.8 H205.6 V100.4 H196 Z M200.8 90.8 V100.4 M196 95.6 H205.6" fill="none" stroke="#8e8d91" stroke-width="0.9" stroke-linecap="round" stroke-linejoin="round"/>
<path d="M211.3 95.35 l1.7 1.7 l1.7 -1.7" fill="none" stroke="#e8e8e8" stroke-width="1.1" stroke-linecap="round" stroke-linejoin="round"/>
<rect x="221.2" y="90" width="1" height="12" fill="#434246"/>
<path d="M233.2 91.6 L237.4 95.2 L234.6 97.6 L231.4 95 Z M232.6 91 L234.2 92.6" fill="none" stroke="#dcdcdc" stroke-width="0.8" stroke-linecap="round" stroke-linejoin="round"/>
<path d="M238.4 95.4 q1 1.6 0 2.2 q-1 -0.6 0 -2.2" fill="#dcdcdc" stroke="#dcdcdc" stroke-width="0.5" stroke-linecap="round" stroke-linejoin="round"/>
<rect x="229.7" y="98.7" width="10.3" height="2.1" rx="0" fill="#e6e23a"/>
<path d="M244.1 95.35 l1.7 1.7 l1.7 -1.7" fill="none" stroke="#e8e8e8" stroke-width="1.1" stroke-linecap="round" stroke-linejoin="round"/>
<text x="258.4" y="97.6" font-size="8.4" font-weight="normal" text-anchor="middle" fill="#e8e8e8">A</text>
<rect x="253.3" y="98.7" width="10.4" height="2.1" rx="0" fill="#f2f2f2"/>
<path d="M268.3 95.35 l1.7 1.7 l1.7 -1.7" fill="none" stroke="#e8e8e8" stroke-width="1.1" stroke-linecap="round" stroke-linejoin="round"/>
<rect x="290.3" y="65.2" width="1" height="38.3" fill="#434246"/>
<rect x="330" y="68.1" width="14.9" height="15" rx="1.2" fill="#48474b"/>
<rect x="330" y="88.4" width="14.9" height="15" rx="1.2" fill="#48474b"/>
<rect x="300.2" y="70.0" width="9.6" height="1" rx="0" fill="#d6d6d6"/>
<rect x="301.7" y="72.7" width="6.6" height="1" rx="0" fill="#d6d6d6"/>
<rect x="300.2" y="75.4" width="9.6" height="1" rx="0" fill="#d6d6d6"/>
<rect x="316.4" y="72.2" width="9.6" height="1" rx="0" fill="#d6d6d6"/>
<rect x="317.9" y="74.9" width="6.6" height="1" rx="0" fill="#d6d6d6"/>
<rect x="316.4" y="77.6" width="9.6" height="1" rx="0" fill="#d6d6d6"/>
<rect x="332.6" y="74.6" width="9.6" height="1" rx="0" fill="#d6d6d6"/>
<rect x="334.1" y="77.3" width="6.6" height="1" rx="0" fill="#d6d6d6"/>
<rect x="332.6" y="80.0" width="9.6" height="1" rx="0" fill="#d6d6d6"/>
<rect x="300.2" y="90.7" width="9.6" height="1" rx="0" fill="#d6d6d6"/>
<rect x="300.2" y="93.3" width="6.4" height="1" rx="0" fill="#d6d6d6"/>
<rect x="300.2" y="95.9" width="9.6" height="1" rx="0" fill="#d6d6d6"/>
<rect x="300.2" y="98.5" width="6.4" height="1" rx="0" fill="#d6d6d6"/>
<rect x="316.4" y="90.7" width="9.6" height="1" rx="0" fill="#d6d6d6"/>
<rect x="318.0" y="93.3" width="6.4" height="1" rx="0" fill="#d6d6d6"/>
<rect x="316.4" y="95.9" width="9.6" height="1" rx="0" fill="#d6d6d6"/>
<rect x="318.0" y="98.5" width="6.4" height="1" rx="0" fill="#d6d6d6"/>
<rect x="332.6" y="90.7" width="9.6" height="1" rx="0" fill="#d6d6d6"/>
<rect x="335.8" y="93.3" width="6.4" height="1" rx="0" fill="#d6d6d6"/>
<rect x="332.6" y="95.9" width="9.6" height="1" rx="0" fill="#d6d6d6"/>
<rect x="335.8" y="98.5" width="6.4" height="1" rx="0" fill="#d6d6d6"/>
<rect x="350.3" y="70" width="1" height="12" fill="#434246"/>
<rect x="350.3" y="90" width="1" height="12" fill="#434246"/>
<text x="358.4" y="77" font-size="5.6" font-weight="normal" text-anchor="start" fill="#d8d8d8" transform="rotate(-38 361 76)">ab</text>
<path d="M359.4 80.6 L367.6 73.4 M365.4 73.2 H367.8 V75.6" fill="none" stroke="#dcdcdc" stroke-width="0.7" stroke-linecap="round" stroke-linejoin="round"/>
<path d="M373.0 75.35 l1.7 1.7 l1.7 -1.7" fill="none" stroke="#e8e8e8" stroke-width="1.1" stroke-linecap="round" stroke-linejoin="round"/>
<rect x="358.5" y="91" width="9.6" height="0.9" rx="0" fill="#d6d6d6"/>
<rect x="358.5" y="99.6" width="9.6" height="0.9" rx="0" fill="#d6d6d6"/>
<rect x="362.90000000000003" y="93.9" width="5.2" height="0.9" rx="0" fill="#d6d6d6"/>
<rect x="362.90000000000003" y="96.8" width="5.2" height="0.9" rx="0" fill="#d6d6d6"/>
<rect x="374.9" y="91" width="9.6" height="0.9" rx="0" fill="#d6d6d6"/>
<rect x="374.9" y="99.6" width="9.6" height="0.9" rx="0" fill="#d6d6d6"/>
<rect x="379.3" y="93.9" width="5.2" height="0.9" rx="0" fill="#d6d6d6"/>
<rect x="379.3" y="96.8" width="5.2" height="0.9" rx="0" fill="#d6d6d6"/>
<path d="M361.6 95.8 H358.6 M359.8 94.6 L358.5 95.8 L359.8 97" fill="none" stroke="#dcdcdc" stroke-width="0.7" stroke-linecap="round" stroke-linejoin="round"/>
<path d="M374.8 95.8 H377.9 M376.7 94.6 L378 95.8 L376.7 97" fill="none" stroke="#dcdcdc" stroke-width="0.7" stroke-linecap="round" stroke-linejoin="round"/>
<rect x="392.1" y="65.2" width="1" height="38.3" fill="#434246"/>
<text x="401.3" y="76.2" font-size="7.2" font-weight="normal" text-anchor="start" fill="#dadada" textLength="8.4" lengthAdjust="spacingAndGlyphs">ab</text>
<text x="401.5" y="81.2" font-size="5.8" font-weight="normal" text-anchor="start" fill="#cfcfcf">c</text>
<path d="M410 77.6 Q410.2 79.6 408.2 79.6 H405.6 M406.8 78.4 L405.5 79.6 L406.8 80.8" fill="none" stroke="#cfcfcf" stroke-width="0.65" stroke-linecap="round" stroke-linejoin="round"/>
<text x="414.5" y="78.8" font-size="7.2" font-weight="normal" text-anchor="start" fill="#f1f1f1" textLength="31.2" lengthAdjust="spacingAndGlyphs" stroke="#f1f1f1" stroke-width="0.32">Wrap Text</text>
<path d="M449.6 75.55 l1.7 1.7 l1.7 -1.7" fill="none" stroke="#e8e8e8" stroke-width="1.1" stroke-linecap="round" stroke-linejoin="round"/>
<rect x="400.4" y="91.4" width="9.4" height="9.2" rx="0.5" fill="#1d3557" stroke="#c3ccd9" stroke-width="0.8"/>
<rect x="400.8" y="94.2" width="8.6" height="3" rx="0" fill="#2f62a4"/>
<path d="M400.8 93.4 H409.4 M400.8 98.4 H409.4" fill="none" stroke="#7f93b4" stroke-width="0.4" stroke-linecap="round" stroke-linejoin="round"/>
<path d="M402 95.7 H408.2 M403 94.9 L402 95.7 L403 96.5 M407.2 94.9 L408.2 95.7 L407.2 96.5" fill="none" stroke="#f0f0f0" stroke-width="0.5" stroke-linecap="round" stroke-linejoin="round"/>
<text x="414.5" y="98.8" font-size="7.2" font-weight="normal" text-anchor="start" fill="#f1f1f1" textLength="49" lengthAdjust="spacingAndGlyphs" stroke="#f1f1f1" stroke-width="0.32">Merge &amp; Center</text>
<path d="M467.4 95.55 l1.7 1.7 l1.7 -1.7" fill="none" stroke="#e8e8e8" stroke-width="1.1" stroke-linecap="round" stroke-linejoin="round"/>
<rect x="479.1" y="65.2" width="1" height="38.3" fill="#434246"/>
<rect x="488" y="67.9" width="95.9" height="15.7" rx="1.5" fill="#333236"/>
<text x="489.8" y="78.3" font-size="7.6" font-weight="normal" text-anchor="start" fill="#f1f1f1" textLength="27.4" lengthAdjust="spacingAndGlyphs" stroke="#f1f1f1" stroke-width="0.32">Custom</text>
<path d="M576.8 75.35 l1.7 1.7 l1.7 -1.7" fill="none" stroke="#e8e8e8" stroke-width="1.1" stroke-linecap="round" stroke-linejoin="round"/>
<rect x="488.6" y="93" width="8.4" height="4.6" rx="0.4" fill="none" stroke="#d0d0d0" stroke-width="0.8"/>
<circle cx="492.8" cy="95.3" r="1" fill="#d0d0d0"/>
<path d="M494.6 96.4 H498.6 M494.6 98 H498.6 M494.6 99.6 H498.6" fill="none" stroke="#d0d0d0" stroke-width="0.8" stroke-linecap="round" stroke-linejoin="round"/>
<path d="M503.3 95.55 l1.7 1.7 l1.7 -1.7" fill="none" stroke="#e8e8e8" stroke-width="1.1" stroke-linecap="round" stroke-linejoin="round"/>
<text x="517.2" y="99.8" font-size="11" font-weight="normal" text-anchor="middle" fill="#e2e2e2">%</text>
<circle cx="534.1" cy="94.2" r="2" fill="#e6e6e6"/><path d="M536.1 94 Q536.6 98.6 532 100.4 Q534.6 97.8 532.8 95.4 Z" fill="#e6e6e6" stroke="#e6e6e6" stroke-width="0.4"/>
<rect x="545.8" y="90" width="1" height="12" fill="#434246"/>
<text x="559.6" y="96" font-size="6.3" font-weight="normal" text-anchor="start" fill="#d2d2d2">0</text>
<text x="555.2" y="101.8" font-size="6.3" font-weight="normal" text-anchor="start" fill="#d2d2d2" textLength="8.6" lengthAdjust="spacingAndGlyphs">.00</text>
<path d="M558.6 93.7 H555.2 M556.3 92.6 L555.1 93.7 L556.3 94.8" fill="none" stroke="#d2d2d2" stroke-width="0.6" stroke-linecap="round" stroke-linejoin="round"/>
<text x="572.6" y="96" font-size="6.3" font-weight="normal" text-anchor="start" fill="#d2d2d2" textLength="8.6" lengthAdjust="spacingAndGlyphs">.00</text>
<text x="577.4" y="101.8" font-size="6.3" font-weight="normal" text-anchor="start" fill="#d2d2d2">0</text>
<path d="M571.4 99.5 H575.6 M574.4 98.4 L575.7 99.5 L574.4 100.6" fill="none" stroke="#3f86e6" stroke-width="0.8" stroke-linecap="round" stroke-linejoin="round"/>
<rect x="590.2" y="65.2" width="1" height="38.3" fill="#434246"/>
<path d="M602.7 70 H620.5 V83.6 H602.7 Z M608.63 70 V83.6 M614.57 70 V83.6 M602.7 74.53 H620.5 M602.7 79.07 H620.5" fill="none" stroke="#c9c9c9" stroke-width="0.6" stroke-linecap="round" stroke-linejoin="round"/>
<rect x="606" y="70.3" width="9.8" height="13" rx="0" fill="#c23a3d" opacity="0.93"/>
<rect x="606" y="75.8" width="5.2" height="2.3" rx="0" fill="#3f8ccf"/>
<rect x="611.4" y="74.6" width="4.4" height="4.4" rx="0" fill="#1f4a3c" opacity="0.9"/>
<path d="M602.7 74.53 H620.5 M602.7 79.07 H620.5 M608.63 70 V83.6 M614.57 70 V83.6" fill="none" stroke="#d9b0b0" stroke-width="0.35" stroke-linecap="round" stroke-linejoin="round"/>
<path d="M624.7 76.45 l1.7 1.7 l1.7 -1.7" fill="none" stroke="#e8e8e8" stroke-width="1.1" stroke-linecap="round" stroke-linejoin="round"/>
<text x="598.0" y="95.9" font-size="6.9" font-weight="normal" text-anchor="start" fill="#f1f1f1" textLength="35" lengthAdjust="spacingAndGlyphs" stroke="#f1f1f1" stroke-width="0.32">Conditional</text>
<text x="598.7" y="103.4" font-size="6.9" font-weight="normal" text-anchor="start" fill="#f1f1f1" textLength="33.6" lengthAdjust="spacingAndGlyphs" stroke="#f1f1f1" stroke-width="0.32">Formatting</text>
<rect x="645" y="74.7" width="11.8" height="9" rx="0" fill="#2f69c4"/>
<path d="M639 70.2 H656.8 V83.8 H639 Z M644.93 70.2 V83.8 M650.87 70.2 V83.8 M639 74.73 H656.8 M639 79.27 H656.8" fill="none" stroke="#c9c9c9" stroke-width="0.6" stroke-linecap="round" stroke-linejoin="round"/>
<path d="M656.6 74.2 L650.2 81.6" fill="none" stroke="#1f2a40" stroke-width="2.3" stroke-linecap="round" stroke-linejoin="round"/>
<path d="M656.6 74.2 L650.2 81.6" fill="none" stroke="#dfe8f8" stroke-width="1.2" stroke-linecap="round" stroke-linejoin="round"/>
<path d="M650.4 81 Q651.8 83.4 648.8 84.8 Q646.2 85.6 645 84.4 Q647.6 83.6 648 81.6 Z" fill="#5b93e6" stroke="#6aa0f0" stroke-width="0.5" stroke-linecap="round" stroke-linejoin="round"/>
<path d="M661.1 76.45 l1.7 1.7 l1.7 -1.7" fill="none" stroke="#e8e8e8" stroke-width="1.1" stroke-linecap="round" stroke-linejoin="round"/>
<text x="640.1" y="95.9" font-size="6.9" font-weight="normal" text-anchor="start" fill="#f1f1f1" textLength="21.8" lengthAdjust="spacingAndGlyphs" stroke="#f1f1f1" stroke-width="0.32">Format</text>
<text x="638.3" y="103.4" font-size="6.9" font-weight="normal" text-anchor="start" fill="#f1f1f1" textLength="25.4" lengthAdjust="spacingAndGlyphs" stroke="#f1f1f1" stroke-width="0.32">as Table</text>
<rect x="673.6" y="72.6" width="11" height="8" rx="0" fill="#2f69c4"/>
<path d="M670.2 70.2 H688.0 V83.8 H670.2 Z M676.13 70.2 V83.8 M682.07 70.2 V83.8 M670.2 74.73 H688.0 M670.2 79.27 H688.0" fill="none" stroke="#c9c9c9" stroke-width="0.6" stroke-linecap="round" stroke-linejoin="round"/>
<rect x="673.6" y="72.6" width="11" height="8" rx="0" fill="#2f69c4"/>
<path d="M687.8 74.2 L681.4 81.6" fill="none" stroke="#1f2a40" stroke-width="2.3" stroke-linecap="round" stroke-linejoin="round"/>
<path d="M687.8 74.2 L681.4 81.6" fill="none" stroke="#dfe8f8" stroke-width="1.2" stroke-linecap="round" stroke-linejoin="round"/>
<path d="M681.6 81 Q683 83.4 680 84.8 Q677.4 85.6 676.2 84.4 Q678.8 83.6 679.2 81.6 Z" fill="#5b93e6" stroke="#6aa0f0" stroke-width="0.5" stroke-linecap="round" stroke-linejoin="round"/>
<path d="M692.3 76.45 l1.7 1.7 l1.7 -1.7" fill="none" stroke="#e8e8e8" stroke-width="1.1" stroke-linecap="round" stroke-linejoin="round"/>
<text x="676.8" y="95.9" font-size="6.9" font-weight="normal" text-anchor="start" fill="#f1f1f1" textLength="11.2" lengthAdjust="spacingAndGlyphs" stroke="#f1f1f1" stroke-width="0.32">Cell</text>
<text x="673.1" y="103.4" font-size="6.9" font-weight="normal" text-anchor="start" fill="#f1f1f1" textLength="18.6" lengthAdjust="spacingAndGlyphs" stroke="#f1f1f1" stroke-width="0.32">Styles</text>
<rect x="704.1" y="65.2" width="1" height="38.3" fill="#434246"/>
<path d="M713.6 70.4 H732.2 V83.60000000000001 H713.6 Z M719.8 70.4 V83.60000000000001 M726.0 70.4 V83.60000000000001 M713.6 74.8 H732.2 M713.6 79.2 H732.2" fill="none" stroke="#c9c9c9" stroke-width="0.6" stroke-linecap="round" stroke-linejoin="round"/>
<rect x="716" y="74.4" width="15.6" height="4.6" rx="0" fill="#3a74cf"/>
<path d="M712.8 76.7 L716.4 73.4 V80 Z" fill="#3a74cf" stroke="#7fb0f5" stroke-width="0.5" stroke-linecap="round" stroke-linejoin="round"/>
<path d="M735.5 76.45 l1.7 1.7 l1.7 -1.7" fill="none" stroke="#e8e8e8" stroke-width="1.1" stroke-linecap="round" stroke-linejoin="round"/>
<text x="716.4" y="95.9" font-size="6.9" font-weight="normal" text-anchor="start" fill="#f1f1f1" textLength="18.2" lengthAdjust="spacingAndGlyphs" stroke="#f1f1f1" stroke-width="0.32">Insert</text>
<path d="M745.2 70.4 H763.0 V83.60000000000001 H745.2 Z M751.13 70.4 V83.60000000000001 M757.07 70.4 V83.60000000000001 M745.2 74.8 H763.0 M745.2 79.2 H763.0" fill="none" stroke="#c9c9c9" stroke-width="0.6" stroke-linecap="round" stroke-linejoin="round"/>
<rect x="746.6" y="74.6" width="10" height="4.4" rx="0" fill="#3a74cf"/>
<path d="M756.4 73.6 L762.4 80.2 M762.4 73.6 L756.4 80.2" fill="none" stroke="#d8453f" stroke-width="0.9" stroke-linecap="round" stroke-linejoin="round"/>
<path d="M766.9 76.45 l1.7 1.7 l1.7 -1.7" fill="none" stroke="#e8e8e8" stroke-width="1.1" stroke-linecap="round" stroke-linejoin="round"/>
<text x="746.8" y="95.9" font-size="6.9" font-weight="normal" text-anchor="start" fill="#f1f1f1" textLength="20" lengthAdjust="spacingAndGlyphs" stroke="#f1f1f1" stroke-width="0.32">Delete</text>
<path d="M776.2 70.4 H793.4000000000001 V83.60000000000001 H776.2 Z M781.93 70.4 V83.60000000000001 M787.67 70.4 V83.60000000000001 M776.2 74.8 H793.4000000000001 M776.2 79.2 H793.4000000000001" fill="none" stroke="#c9c9c9" stroke-width="0.6" stroke-linecap="round" stroke-linejoin="round"/>
<rect x="781.8" y="74.6" width="6" height="4.6" rx="0" fill="#3a74cf"/>
<rect x="780.6" y="68.2" width="8.4" height="0.8" rx="0" fill="#8a8a8e"/>
<path d="M798.6 76.45 l1.7 1.7 l1.7 -1.7" fill="none" stroke="#e8e8e8" stroke-width="1.1" stroke-linecap="round" stroke-linejoin="round"/>
<text x="777.6" y="95.9" font-size="6.9" font-weight="normal" text-anchor="start" fill="#f1f1f1" textLength="21.6" lengthAdjust="spacingAndGlyphs" stroke="#f1f1f1" stroke-width="0.32">Format</text>
<rect x="809.9" y="65.2" width="1" height="38.3" fill="#434246"/>
<path d="M827.4 69.4 V68.4 H820.2 L824 72.6 L820.2 76.8 H827.4 V75.8" fill="none" stroke="#dcdcdc" stroke-width="0.9" stroke-linecap="round" stroke-linejoin="round"/>
<text x="833" y="74.7" font-size="7.1" font-weight="normal" text-anchor="start" fill="#f1f1f1" textLength="27.8" lengthAdjust="spacingAndGlyphs" stroke="#f1f1f1" stroke-width="0.32">AutoSum</text>
<path d="M865.3 71.95 l1.7 1.7 l1.7 -1.7" fill="none" stroke="#e8e8e8" stroke-width="1.1" stroke-linecap="round" stroke-linejoin="round"/>
<path d="M819.4 81.8 H828.2 V90.6 H819.4 Z M819.4 83.8 H828.2" fill="none" stroke="#c9c9c9" stroke-width="0.8" stroke-linecap="round" stroke-linejoin="round"/>
<path d="M823.8 85.2 V88.8 M822.4 87.6 L823.8 89 L825.2 87.6" fill="none" stroke="#c9c9c9" stroke-width="0.7" stroke-linecap="round" stroke-linejoin="round"/>
<text x="833" y="88.3" font-size="7.1" font-weight="normal" text-anchor="start" fill="#f1f1f1" textLength="8.7" lengthAdjust="spacingAndGlyphs" stroke="#f1f1f1" stroke-width="0.32">Fill</text>
<path d="M845.8 85.75 l1.7 1.7 l1.7 -1.7" fill="none" stroke="#e8e8e8" stroke-width="1.1" stroke-linecap="round" stroke-linejoin="round"/>
<path d="M819.2 101 L824.6 96 L828.6 99 L823.4 104.2 H821.4 Z M822 98.6 L826 101.8" fill="none" stroke="#c773d6" stroke-width="0.9" stroke-linecap="round" stroke-linejoin="round"/>
<text x="833" y="102" font-size="7.1" font-weight="normal" text-anchor="start" fill="#f1f1f1" textLength="15.8" lengthAdjust="spacingAndGlyphs" stroke="#f1f1f1" stroke-width="0.32">Clear</text>
<path d="M853.3 99.45 l1.7 1.7 l1.7 -1.7" fill="none" stroke="#e8e8e8" stroke-width="1.1" stroke-linecap="round" stroke-linejoin="round"/>
<text x="877" y="76.2" font-size="8.6" font-weight="normal" text-anchor="middle" fill="#7f92cf">A</text>
<text x="877" y="85.4" font-size="8.6" font-weight="normal" text-anchor="middle" fill="#c4c4c4">Z</text>
<path d="M882.6 72.6 H893 L889 77.4 V82 L886.6 80.6 V77.4 Z" fill="none" stroke="#dcdcdc" stroke-width="0.9" stroke-linecap="round" stroke-linejoin="round"/>
<path d="M896.6 76.45 l1.7 1.7 l1.7 -1.7" fill="none" stroke="#e8e8e8" stroke-width="1.1" stroke-linecap="round" stroke-linejoin="round"/>
<text x="876.9" y="95.9" font-size="6.9" font-weight="normal" text-anchor="start" fill="#f1f1f1" textLength="19.6" lengthAdjust="spacingAndGlyphs" stroke="#f1f1f1" stroke-width="0.32">Sort &amp;</text>
<text x="878.9" y="103.4" font-size="6.9" font-weight="normal" text-anchor="start" fill="#f1f1f1" textLength="15.6" lengthAdjust="spacingAndGlyphs" stroke="#f1f1f1" stroke-width="0.32">Filter</text>
<circle cx="916.9" cy="75.2" r="6.9" fill="none" stroke="#d8d8d8" stroke-width="0.9"/>
<path d="M911.8 80.2 L905.4 86.6" fill="none" stroke="#dcdcdc" stroke-width="0.9" stroke-linecap="round" stroke-linejoin="round"/>
<path d="M928.3 76.45 l1.7 1.7 l1.7 -1.7" fill="none" stroke="#e8e8e8" stroke-width="1.1" stroke-linecap="round" stroke-linejoin="round"/>
<text x="907.6" y="95.9" font-size="6.9" font-weight="normal" text-anchor="start" fill="#f1f1f1" textLength="20.4" lengthAdjust="spacingAndGlyphs" stroke="#f1f1f1" stroke-width="0.32">Find &amp;</text>
<text x="908.0" y="103.4" font-size="6.9" font-weight="normal" text-anchor="start" fill="#f1f1f1" textLength="19.6" lengthAdjust="spacingAndGlyphs" stroke="#f1f1f1" stroke-width="0.32">Select</text>
<rect x="939.8" y="65.2" width="1" height="38.3" fill="#434246"/>
<path d="M951.4 68.6 H968.8 V86.2 H951.4 Z M960.1 68.6 V86.2 M951.4 77.4 H968.8" fill="none" stroke="#8f3d24" stroke-width="1.6" stroke-linecap="round" stroke-linejoin="round"/>
<text x="948.3" y="95.9" font-size="6.9" font-weight="normal" text-anchor="start" fill="#f1f1f1" textLength="24" lengthAdjust="spacingAndGlyphs" stroke="#f1f1f1" stroke-width="0.32">Add-ins</text>
<rect x="980.0" y="65.2" width="1" height="38.3" fill="#434246"/>
<path d="M991.2 67.6 H1010.6 V87.0 H991.2 Z M997.67 67.6 V87.0 M1004.13 67.6 V87.0 M991.2 72.45 H1010.6 M991.2 77.3 H1010.6 M991.2 82.15 H1010.6" fill="none" stroke="#c4c4c4" stroke-width="0.6" stroke-linecap="round" stroke-linejoin="round"/>
<circle cx="1000" cy="75.8" r="6.2" fill="#2a292c" stroke="#e2e2e2" stroke-width="0.9"/>
<rect x="996.8" y="74.6" width="1.9" height="4.2" rx="0" fill="#c9c9c9"/>
<rect x="999" y="72.6" width="1.9" height="6.2" rx="0" fill="#e6e6e6"/>
<rect x="1001.2" y="73.8" width="1.9" height="5" rx="0" fill="#3b8be6"/>
<path d="M1004.4 80.4 L1010.4 86.8" fill="none" stroke="#e2e2e2" stroke-width="0.9" stroke-linecap="round" stroke-linejoin="round"/>
<text x="988.5" y="95.9" font-size="6.9" font-weight="normal" text-anchor="start" fill="#f1f1f1" textLength="24.6" lengthAdjust="spacingAndGlyphs" stroke="#f1f1f1" stroke-width="0.32">Analyze</text>
<text x="993.8" y="103.4" font-size="6.9" font-weight="normal" text-anchor="start" fill="#f1f1f1" textLength="14" lengthAdjust="spacingAndGlyphs" stroke="#f1f1f1" stroke-width="0.32">Data</text>
<defs><linearGradient id="cpa" x1="0.3" y1="0" x2="0.4" y2="1"><stop offset="0" stop-color="#2b8fe8"/><stop offset=".45" stop-color="#25b0b0"/><stop offset=".75" stop-color="#5cc45a"/><stop offset="1" stop-color="#f0c92e"/></linearGradient><linearGradient id="cpb" x1="0.6" y1="0" x2="0.4" y2="1"><stop offset="0" stop-color="#7a5cf0"/><stop offset=".45" stop-color="#d455c8"/><stop offset=".8" stop-color="#f06a7a"/><stop offset="1" stop-color="#f5903a"/></linearGradient></defs>
<g transform="translate(1028.7 77) scale(1.1 1.04) translate(-1028.7 -77)">
<path d="M1023.6 69 H1030.2 Q1032 69 1032.6 70.8 L1033.4 73.4 H1029.6 Q1027.8 73.4 1027.2 75.2 L1025.4 81.6 Q1024.8 83.6 1022.8 83.6 H1020.6 Q1018.6 83.6 1019.2 81.4 L1021.6 71 Q1022.2 69 1023.6 69 Z" fill="url(#cpa)"/>
<path d="M1034 85.2 H1027.2 Q1025.4 85.2 1024.8 83.4 L1024.2 81 H1028 Q1029.8 81 1030.4 79.2 L1032.2 72.8 Q1032.8 70.8 1034.8 70.8 H1037 Q1039 70.8 1038.4 73 L1036 83.2 Q1035.4 85.2 1034 85.2 Z" fill="url(#cpb)"/>
</g>
<text x="1017.5" y="95.9" font-size="6.9" font-weight="normal" text-anchor="start" fill="#f1f1f1" textLength="22.4" lengthAdjust="spacingAndGlyphs" stroke="#f1f1f1" stroke-width="0.32">Copilot</text>
<rect x="1047.8" y="65.2" width="1" height="38.3" fill="#434246"/>
<circle cx="1071.7" cy="77" r="9.2" fill="#d6d5d8"/>
<text x="1063.2" y="95.9" font-size="6.9" font-weight="normal" text-anchor="start" fill="#f1f1f1" textLength="17" lengthAdjust="spacingAndGlyphs" stroke="#f1f1f1" stroke-width="0.32">Show</text>
<text x="1056.0" y="103.4" font-size="6.9" font-weight="normal" text-anchor="start" fill="#f1f1f1" textLength="31.4" lengthAdjust="spacingAndGlyphs" stroke="#f1f1f1" stroke-width="0.32">Task Pane</text>
<rect x="35" y="108.4" width="1130" height="1" rx="0" fill="#19181b"/>
<rect x="35" y="109.3" width="1130" height="16.6" rx="0" fill="#2b2a2d"/>
<rect x="148" y="109.3" width="1017" height="16.6" rx="0" fill="#363538"/>
<rect x="35" y="126.5" width="113" height="1.6" rx="0" fill="#c4c4c6"/>
<rect x="148" y="126" width="1017" height="2.1" rx="0" fill="#c4c4c6"/>
<text x="41.7" y="119.9" font-size="7.5" font-weight="normal" text-anchor="start" fill="#e6e6e6" textLength="14.1" lengthAdjust="spacingAndGlyphs">G29</text>
<path d="M82.9 115.9 L85 112.7 L87.1 115.9 Z" fill="#d4d4d4" stroke="#d4d4d4" stroke-width="0.3" stroke-linecap="round" stroke-linejoin="round"/>
<path d="M82.9 119.7 L85 122.9 L87.1 119.7 Z" fill="#d4d4d4" stroke="#d4d4d4" stroke-width="0.3" stroke-linecap="round" stroke-linejoin="round"/>
<path d="M98.6 115.8 L103 120.2 M103 115.8 L98.6 120.2" fill="none" stroke="#545357" stroke-width="1.1" stroke-linecap="round" stroke-linejoin="round"/>
<path d="M116.8 118.4 L118.8 120.6 L122.8 115.6" fill="none" stroke="#545357" stroke-width="1.3" stroke-linecap="round" stroke-linejoin="round"/>
<text x="134.2" y="120.6" font-size="9.6" font-weight="normal" text-anchor="start" fill="#a3a3a6" font-style="italic" font-family="Liberation Serif, serif">fx</text>
<text x="153" y="120" font-size="7.6" font-weight="normal" text-anchor="start" fill="#f4f4f4" textLength="36.7" lengthAdjust="spacingAndGlyphs">=F29+G25</text>
<path d="M1155.2 116 L1157.4 119.6 L1159.6 116 Z" fill="#d0d0d0" stroke="#d0d0d0" stroke-width="0.3" stroke-linecap="round" stroke-linejoin="round"/>
<rect x="35" y="689.3" width="1130" height="2.3" rx="0" fill="#161518"/>
<defs><linearGradient id="hs" x1="0" y1="0" x2="0" y2="1"><stop offset="0" stop-color="#48474a"/><stop offset=".5" stop-color="#626163"/><stop offset="1" stop-color="#6b6a6c"/></linearGradient></defs>
<rect x="35" y="691.5" width="1114" height="7.2" rx="0" fill="url(#hs)"/>
<rect x="1140" y="691.5" width="12.6" height="7.2" rx="3" fill="url(#hs)"/>
<rect x="1152.6" y="689.3" width="2.6" height="9.4" rx="0" fill="#ffffff"/>
<rect x="35" y="698.7" width="1130" height="16.7" rx="0" fill="#313032"/>
<rect x="35" y="715.4" width="1130" height="14.2" rx="0" fill="#444346"/>
<rect x="1155.1" y="128.2" width="10" height="571" rx="0" fill="#2d2c2f"/>
<rect x="1155.1" y="128.2" width="10" height="4.4" rx="0" fill="#e8e8e8"/>
<rect x="1157.7" y="132" width="6" height="369" rx="3" fill="#807f82"/>
<path d="M49.2 704.4 V710.6 L44.6 707.5 Z" fill="#565559" stroke="#565559" stroke-width="0.3" stroke-linecap="round" stroke-linejoin="round"/>
<path d="M58.6 704.4 V710.6 L63.2 707.5 Z" fill="#565559" stroke="#565559" stroke-width="0.3" stroke-linecap="round" stroke-linejoin="round"/>
<rect x="74.6" y="698.7" width="47.9" height="14.4" rx="0" fill="#1c1b1e"/>
<text x="89.3" y="710.3" font-size="7.2" font-weight="normal" text-anchor="start" fill="#98989a" textLength="16.6" lengthAdjust="spacingAndGlyphs">Input</text>
<rect x="122.5" y="699.2" width="81.3" height="13.6" rx="0.8" fill="#ffffff"/>
<text x="134.6" y="710.3" font-size="7.2" font-weight="normal" text-anchor="start" fill="#2c7a48" textLength="57.1" lengthAdjust="spacingAndGlyphs" stroke="#2c7a48" stroke-width="0.32">FS_3statements</text>
<path d="M213 707.5 H218.6 M215.8 704.7 V710.3" fill="none" stroke="#d0d0d0" stroke-width="1.2" stroke-linecap="round" stroke-linejoin="round"/>
<rect x="226.5" y="700.5" width="1" height="12.0" fill="#4a494d"/>
<text x="50.6" y="725.4" font-size="7.4" font-weight="normal" text-anchor="start" fill="#e6e6e6" textLength="21.4" lengthAdjust="spacingAndGlyphs">Ready</text>
<circle cx="88.7" cy="719" r="1" fill="none" stroke="#d6d6d6" stroke-width="0.7"/>
<path d="M85 720.8 H92.4 M88.7 720.8 V723.4 M88.7 723.4 L86.2 726.6 M88.7 723.4 L91.2 726.6" fill="none" stroke="#d6d6d6" stroke-width="0.7" stroke-linecap="round" stroke-linejoin="round"/>
<path d="M90.2 724.6 L92.8 727.2 M92.8 724.6 L90.2 727.2" fill="none" stroke="#d6d6d6" stroke-width="0.7" stroke-linecap="round" stroke-linejoin="round"/>
<text x="96.5" y="725.4" font-size="7.4" font-weight="normal" text-anchor="start" fill="#e6e6e6" textLength="86.8" lengthAdjust="spacingAndGlyphs">Accessibility: Investigate</text>
<rect x="965" y="715.4" width="22.8" height="14.2" rx="0" fill="#545356"/>
<path d="M972 717.8 H980.6 V726.4 H972 Z M974.9 717.8 V726.4 M977.7 717.8 V726.4 M972 720.7 H980.6 M972 723.5 H980.6" fill="none" stroke="#ededed" stroke-width="0.8" stroke-linecap="round" stroke-linejoin="round"/>
<path d="M994.6 717.8 H1003.2 V726.4 H994.6 Z" fill="none" stroke="#d0d0d0" stroke-width="0.8" stroke-linecap="round" stroke-linejoin="round"/>
<rect x="996.6" y="719.8" width="4.6" height="4.6" rx="0" fill="#8a898d"/>
<path d="M1017 717.8 H1025.6 V726.4 H1017 Z M1017 722.6 H1021.4 V717.8" fill="none" stroke="#d0d0d0" stroke-width="0.8" stroke-linecap="round" stroke-linejoin="round"/>
<rect x="1037.4" y="721.7" width="5.2" height="1.2" rx="0" fill="#f0f0f0"/>
<rect x="1047.2" y="721" width="62.3" height="2.6" rx="1.3" fill="#6c6b6f"/>
<circle cx="1081.3" cy="722.3" r="4.8" fill="#a09fa2"/>
<path d="M1114 722.3 H1118.8 M1116.4 719.9 V724.7" fill="none" stroke="#f0f0f0" stroke-width="1.3" stroke-linecap="round" stroke-linejoin="round"/>
<text x="1130.2" y="725" font-size="7.2" font-weight="normal" text-anchor="start" fill="#e0e0e0" textLength="19.1" lengthAdjust="spacingAndGlyphs">137%</text>
</svg>
</div></body></html>
